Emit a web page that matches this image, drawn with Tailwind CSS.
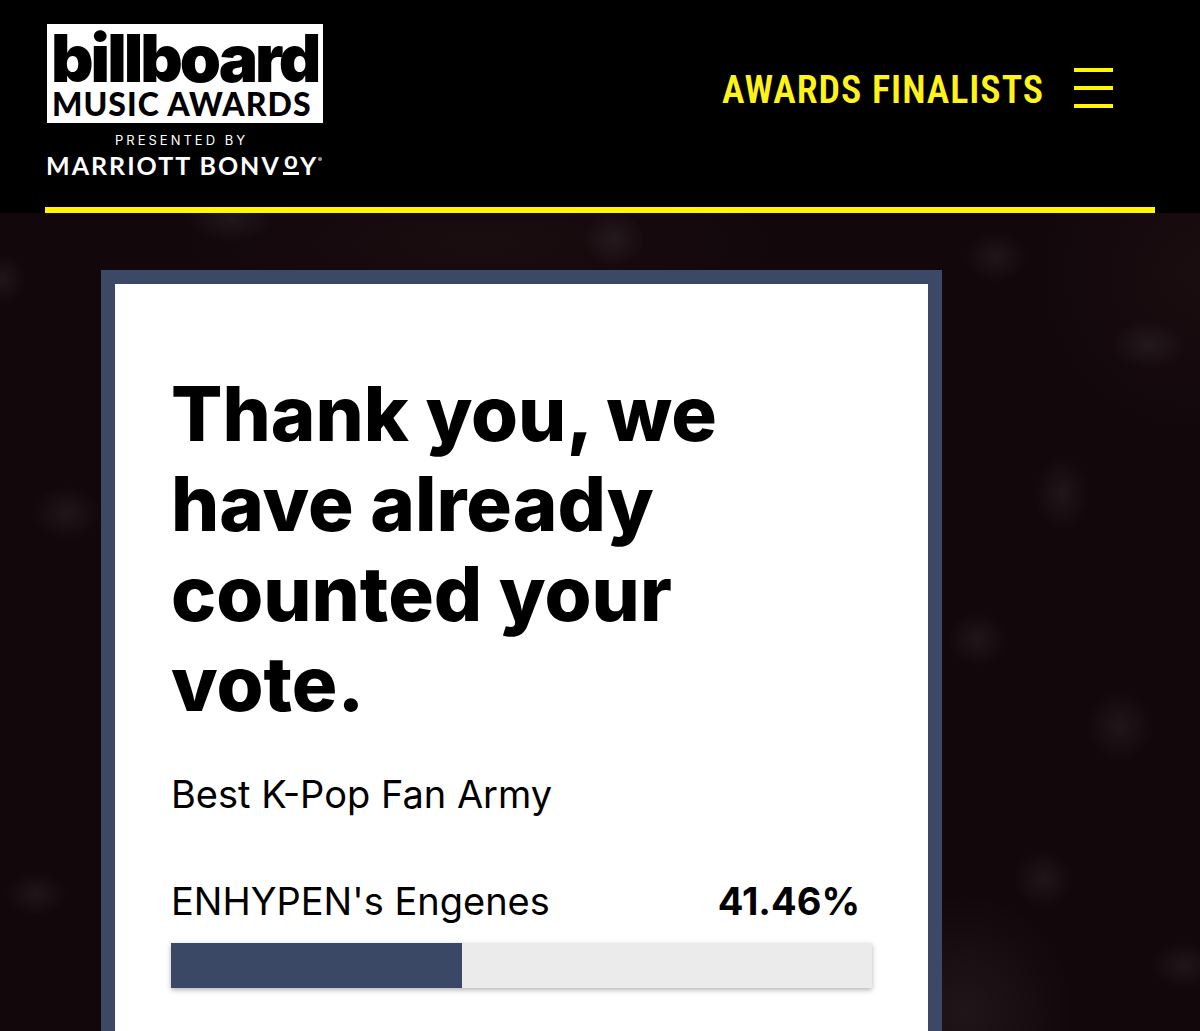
<!DOCTYPE html>
<html lang="en">
<head>
  <meta charset="UTF-8" />
  <meta name="viewport" content="width=device-width, initial-scale=1.0" />
  <title>Billboard Music Awards - Fan Army Vote</title>
  <script src="https://cdn.jsdelivr.net/npm/@tailwindcss/browser@4"></script>
</head>
<body class="flex min-h-screen flex-col bg-[#12070b] font-['Inter',sans-serif] text-black">
  <header class="bg-black px-[45px]">
    <div class="flex items-start justify-between border-b-6 border-[#fff600] pb-[27px] pr-[42px]">
      <a href="#" aria-label="Billboard Music Awards" class="mt-6 block">
        <svg class="h-[156px] w-[280px] overflow-visible" viewBox="0 0 280 156">
          <rect x="2" y="0" width="276" height="99" fill="#fff" />
          <text x="6" y="58" font-family="Inter" font-weight="900" font-size="66" letter-spacing="-3">billboard</text>
          <text x="7" y="92" font-family="Lato" font-weight="900" font-size="32" letter-spacing="1">MUSIC AWARDS</text>
          <text x="70" y="121" font-family="Inter" font-size="13" letter-spacing="3" fill="#fff">PRESENTED BY</text>
          <text x="1" y="151" font-family="Lato" font-weight="700" font-size="25" letter-spacing="2" fill="#fff">MARRIOTT BONV</text>
          <text x="239" y="145" font-family="Lato" font-weight="700" font-size="24" fill="#fff">o</text>
          <rect x="238" y="148" width="16" height="3" fill="#fff" />
          <text x="255" y="151" font-family="Lato" font-weight="700" font-size="25" fill="#fff">Y</text>
          <circle cx="275" cy="135" r="2" fill="#999" />
        </svg>
      </a>
      <nav class="mt-16 flex items-center gap-[30px]">
        <a href="#" class="pt-1 font-['Roboto_Condensed','Roboto',sans-serif] text-[38px] leading-11 font-semibold tracking-wide text-[#fff319]">AWARDS FINALISTS</a>
        <button type="button" aria-label="Menu" class="flex w-[39px] flex-col gap-[14px]">
          <span class="h-1 w-full bg-[#fff600]"></span>
          <span class="h-1 w-full bg-[#fff600]"></span>
          <span class="h-1 w-full bg-[#fff600]"></span>
        </button>
      </nav>
    </div>
  </header>

  <main class="relative flex flex-1 flex-col overflow-hidden pt-[57px] pr-10 pl-[101px]">
    <!-- dim lights in the backdrop -->
    <svg class="absolute inset-0 h-full w-full" viewBox="0 0 1200 818" preserveAspectRatio="none" aria-hidden="true">
      <defs>
        <radialGradient id="light"><stop offset="0" stop-color="#fff" stop-opacity=".06" /><stop offset=".5" stop-color="#fff" stop-opacity=".03" /><stop offset="1" stop-color="#fff" stop-opacity="0" /></radialGradient>
        <radialGradient id="glow"><stop offset="0" stop-color="#a07068" stop-opacity=".06" /><stop offset="1" stop-color="#a07068" stop-opacity="0" /></radialGradient>
      </defs>
      <ellipse cx="480" cy="30" rx="300" ry="80" fill="url(#glow)" />
      <ellipse cx="1200" cy="60" rx="160" ry="160" fill="url(#glow)" />
      <g fill="url(#light)">
        <ellipse cx="2" cy="66" rx="24" ry="26" />
        <ellipse cx="66" cy="300" rx="34" ry="28" />
        <ellipse cx="36" cy="681" rx="32" ry="22" />
        <ellipse cx="230" cy="6" rx="44" ry="24" />
        <ellipse cx="614" cy="26" rx="30" ry="28" />
        <ellipse cx="996" cy="44" rx="32" ry="26" />
        <ellipse cx="1148" cy="132" rx="38" ry="24" />
        <ellipse cx="1062" cy="280" rx="28" ry="38" />
        <ellipse cx="977" cy="426" rx="30" ry="28" />
        <ellipse cx="1120" cy="513" rx="34" ry="36" />
        <ellipse cx="1043" cy="666" rx="30" ry="30" />
        <ellipse cx="1184" cy="752" rx="34" ry="24" />
        <ellipse cx="964" cy="800" rx="110" ry="120" />
      </g>
    </svg>

    <section class="relative w-full max-w-[841px] flex-1 border-14 border-b-0 border-[#3b4866] bg-white px-14 pt-[84px] pb-10">
      <h1 class="text-[76px] leading-[90px] font-extrabold">Thank you, we have already counted your vote.</h1>
      <p class="mt-[38px] text-[38px] leading-[57px]">Best K-Pop Fan Army</p>
      <ul class="mt-[50px]">
        <li>
          <div class="flex items-center justify-between pr-3 text-[38px] leading-[57px]">
            <span>ENHYPEN's Engenes</span>
            <span class="font-bold">41.46%</span>
          </div>
          <div class="mt-[13px] h-[45px] bg-[#ebebeb] shadow-[0_2px_5px_rgba(0,0,0,0.3)]">
            <div class="h-full bg-[#3a4866]" style="width: 41.46%"></div>
          </div>
        </li>
      </ul>
    </section>
  </main>
</body>
</html>
